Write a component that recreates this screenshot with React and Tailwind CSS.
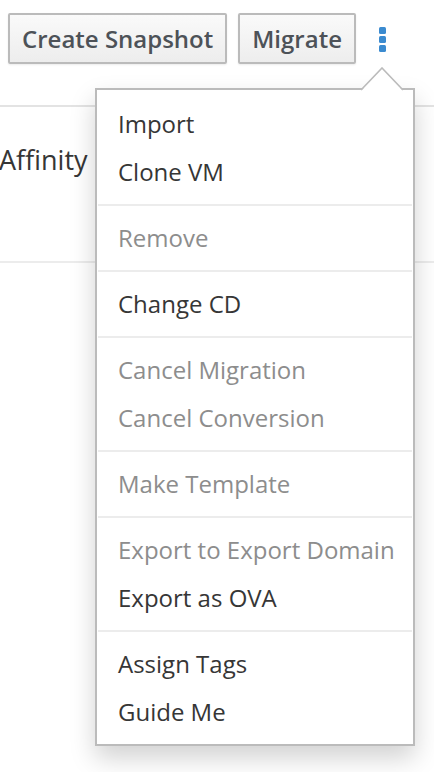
const menuGroups = [
  [
    { label: 'Import' },
    { label: 'Clone VM' },
  ],
  [{ label: 'Remove', disabled: true }],
  [{ label: 'Change CD' }],
  [
    { label: 'Cancel Migration', disabled: true },
    { label: 'Cancel Conversion', disabled: true },
  ],
  [{ label: 'Make Template', disabled: true }],
  [
    { label: 'Export to Export Domain', disabled: true },
    { label: 'Export as OVA' },
  ],
  [
    { label: 'Assign Tags' },
    { label: 'Guide Me' },
  ],
];

const ToolbarButton = ({ children }) => (
  <button className="h-[51px] px-[12px] border-2 border-[#bbbbbb] rounded-[2px] bg-gradient-to-b from-[#fafafa] to-[#ededed] text-[24px] font-semibold text-[#4d5258] leading-none shadow-[0_1px_2px_rgba(0,0,0,0.08)]">
    {children}
  </button>
);

const Kebab = () => (
  <button className="ml-[12px] flex flex-col gap-[2px] pt-[14px]">
    <span className="block w-[7px] h-[7px] rounded-[1.5px] bg-[#3b8bd0]" />
    <span className="block w-[7px] h-[7px] rounded-[1.5px] bg-[#3b8bd0]" />
    <span className="block w-[7px] h-[7px] rounded-[1.5px] bg-[#3b8bd0]" />
  </button>
);

const ActionsMenu = () => (
  <div className="absolute left-[95px] top-[67px] w-[320px]">
    {/* Caret pointing to the kebab */}
    <svg className="absolute left-[265px] top-0 z-10" width="44" height="25" viewBox="0 0 44 25">
      <polygon points="1,24 22,1 43,24" fill="#ffffff" />
      <polyline points="1,23 22,1 43,23" fill="none" stroke="#bbbbbb" strokeWidth="1.6" />
    </svg>
    <ul className="mt-[21px] bg-white border-2 border-[#bbbbbb] pt-[10px] pb-[8px] shadow-[0_12px_24px_rgba(0,0,0,0.18)]">
      {menuGroups.map((group, i) => (
        <li key={i}>
          {i > 0 && <div className="my-[8px] mx-[1px] h-[2px] bg-[#ececec]" />}
          {group.map((item) => (
            <div
              key={item.label}
              className={`h-[48px] flex items-center pl-[21px] text-[24px] ${
                item.disabled ? 'text-[#8d8d8d]' : 'text-[#363636]'
              }`}
            >
              {item.label}
            </div>
          ))}
        </li>
      ))}
    </ul>
  </div>
);

const App = () => {
  return (
    <main
      className="relative w-[434px] h-[772px] bg-white overflow-hidden"
      style={{ fontFamily: '"Open Sans", "Liberation Sans", sans-serif' }}
    >
      {/* Toolbar */}
      <div className="h-[107px] border-b-2 border-[#e3e3e3]">
        <div className="flex items-start pt-[13px] pl-[8px] gap-[11px]">
          <ToolbarButton>Create Snapshot</ToolbarButton>
          <ToolbarButton>Migrate</ToolbarButton>
          <Kebab />
        </div>
      </div>

      {/* Details row */}
      <div className="h-[156px] border-b-2 border-[#ececec] pt-[35px]">
        <p className="-ml-[1px] text-[27px] leading-[36px] text-[#363636]">Affinity</p>
      </div>

      <ActionsMenu />
    </main>
  );
};

export default App;
